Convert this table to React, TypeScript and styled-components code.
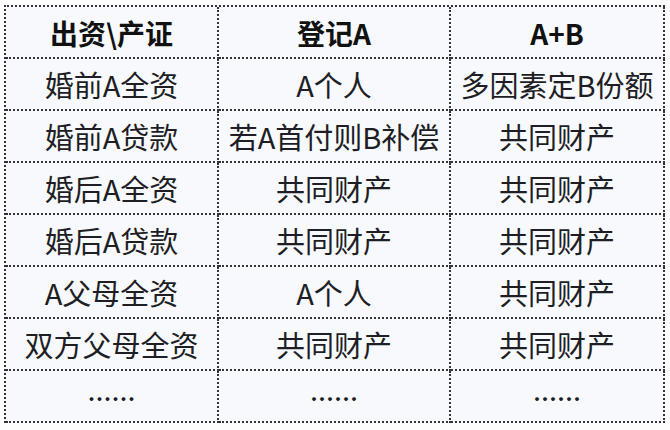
import React from "react";
import styled, { createGlobalStyle } from "styled-components";

const Global = createGlobalStyle`
  html, body { margin: 0; padding: 0; background: #fdfdfe; }
  body { font-family: "Noto Sans CJK SC", "Noto Sans", sans-serif; }
`;

const Page = styled.div`
  padding: 5px 0 0 4px;
  width: 670px;
  height: 430px;
  box-sizing: border-box;
`;

const Table = styled.div`
  display: grid;
  grid-template-columns: 213px 232px 214px;
  grid-auto-rows: 52px;
  width: 661px;
  background: #f7f9fd;
  border-top: 2px dotted #33333f;
  border-left: 2px dotted #33333f;
  box-sizing: border-box;
`;

const Cell = styled.div<{ $head?: boolean }>`
  display: flex;
  align-items: center;
  justify-content: center;
  border-right: 2px dotted #33333f;
  border-bottom: 2px dotted #33333f;
  font-size: ${(p) => (p.$head ? 28 : 29)}px;
  font-weight: ${(p) => (p.$head ? 700 : 400)};
  color: ${(p) => (p.$head ? "#111" : "#1e1e24")};
  white-space: nowrap;
  line-height: 1;
  padding-top: 1px;
`;

const Dots = styled.span`
  font-size: 24px;
  font-weight: 700;
  position: relative;
  top: 1px;
`;

const header = ["出资\\产证", "登记A", "A+B"];
const rows = [
  ["婚前A全资", "A个人", "多因素定B份额"],
  ["婚前A贷款", "若A首付则B补偿", "共同财产"],
  ["婚后A全资", "共同财产", "共同财产"],
  ["婚后A贷款", "共同财产", "共同财产"],
  ["A父母全资", "A个人", "共同财产"],
  ["双方父母全资", "共同财产", "共同财产"],
];

export default function App() {
  return (
    <Page>
      <Global />
      <Table>
        {header.map((h) => (
          <Cell key={h} $head>
            {h}
          </Cell>
        ))}
        {rows.map((r, i) =>
          r.map((c, j) => <Cell key={`${i}-${j}`}>{c}</Cell>)
        )}
        {[0, 1, 2].map((k) => (
          <Cell key={`d${k}`}>
            <Dots>……</Dots>
          </Cell>
        ))}
      </Table>
    </Page>
  );
}
